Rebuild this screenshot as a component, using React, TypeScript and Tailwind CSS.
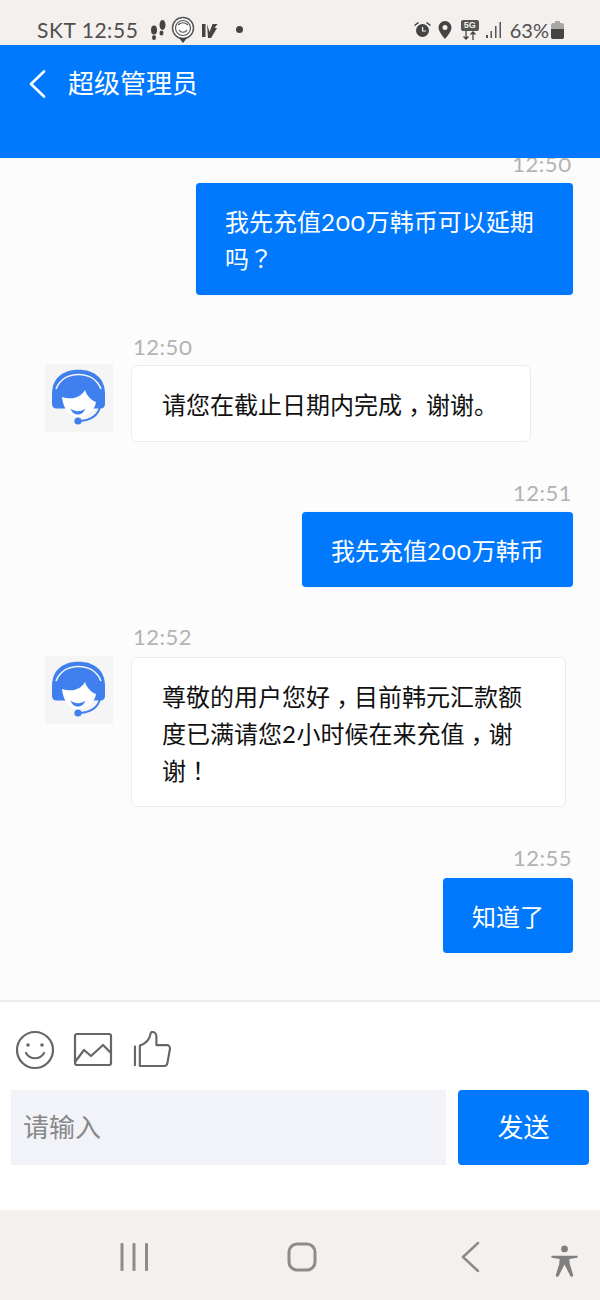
import React from "react";

const CJK = '"Noto Sans CJK SC","Noto Sans",sans-serif';
const LATIN = '"Lato",sans-serif';

function Num({ v }: { v: string }) {
  return (
    <span className="leading-[0] tracking-[0.5px]" style={{ fontFamily: LATIN }}>
      {v.split("").map((c, i) =>
        c === "0" ? (
          <span key={i} className="oldstyle-nums text-[1.12em] leading-[0]" style={{ fontFamily: '"Open Sans",sans-serif' }}>0</span>
        ) : (
          <span key={i}>{c}</span>
        )
      )}
    </span>
  );
}

function P({ c, down }: { c: string; down?: boolean }) {
  return (
    <span className={`inline-block leading-[0] ${down ? "translate-y-[7px]" : ""}`} style={{ fontFamily: '"Noto Sans CJK TC",sans-serif' }}>
      {c}
    </span>
  );
}

function Avatar() {
  return (
    <div className="w-[68px] h-[68px] bg-[#f5f5f5] shrink-0">
      <svg width="68" height="68" viewBox="0 0 68 68">
        <path d="M7 30C7 14 18 5.700 33.500 5.700S60 14 60 30v10c0 3-2 4.500-4.500 4.500H11.500C9 44.500 7 43 7 40Z" fill="#3f80ee" />
        <path d="M11 25C15 15 24 10.500 33.500 10.500S52 15 56 25" fill="none" stroke="#f5f5f5" strokeWidth="1.600" />
        <path d="M17 33C24 35 34 36 40 26c2 6 6 10 11 12-1 8-8.500 15-17.500 15C24 53 18 44 17 33Z" fill="#fff" />
        <path d="M25.500 44.500c5 3.500 10 3.500 15 0-2 4.500-4.500 6-7.500 6s-6-1.500-7.500-6Z" fill="#3f80ee" />
        <path d="M55 43c-2 8-8 13-20 14" fill="none" stroke="#3f80ee" strokeWidth="2" />
        <circle cx="33" cy="57" r="3.600" fill="#3f80ee" />
      </svg>
    </div>
  );
}

function Time({ t, right }: { t: string; right?: boolean }) {
  return (
    <div className={`h-[26px] text-[22px] leading-[22px] text-[#b3b3b3] ${right ? "text-right pr-[28px]" : "pl-[133px]"}`}>
      <Num v={t} />
    </div>
  );
}

function Out({ w, children }: { w: string; children: React.ReactNode }) {
  return (
    <div className="flex justify-end pr-[27px]">
      <div className={`${w} bg-[#0079fe] text-white rounded-[4px] text-[24px] leading-[37px] pl-[29px] pt-[19px] pb-[19px] whitespace-nowrap shadow-[0_0_1px_#9cc9fb]`}>
        {children}
      </div>
    </div>
  );
}

function In({ w, children }: { w: string; children: React.ReactNode }) {
  return (
    <div className="flex items-start pl-[45px]">
      <Avatar />
      <div className={`${w} mt-[1px] ml-[18px] bg-white border border-[#ececec] rounded-[6px] text-[24px] leading-[37px] text-[#111] pl-[30px] pt-[19px] whitespace-nowrap`}>
        {children}
      </div>
    </div>
  );
}

export default function App() {
  return (
    <div className="w-[600px] h-[1300px] flex flex-col overflow-hidden bg-white" style={{ fontFamily: CJK }}>
      <div className="h-[45px] bg-[#f3f0ee] flex items-center justify-between pl-[37px] pr-[36px] pt-[14px] text-[#4f4f4f] shrink-0">
        <div className="flex items-center">
          <span className="text-[21px] leading-none tracking-[0.55px]" style={{ fontFamily: LATIN }}>SKT 12:55</span>
          <svg className="ml-[10px]" width="20" height="22" viewBox="0 0 20 22" fill="#444">
            <ellipse cx="6" cy="11" rx="3" ry="4.500" /><ellipse cx="6" cy="18.500" rx="2" ry="2.500" />
            <ellipse cx="14.500" cy="6" rx="3" ry="5" /><ellipse cx="13.500" cy="14" rx="2" ry="2.500" />
          </svg>
          <svg className="ml-[3px]" width="24" height="28" viewBox="0 0 24 28">
            <circle cx="12" cy="12" r="10.500" fill="#fff" stroke="#555" strokeWidth="1.500" />
            <circle cx="12" cy="12" r="7.500" fill="none" stroke="#555" strokeWidth="1.200" />
            <path d="M8 14c2 3 6 3 8 0M7 9c3-3 7-3 10 0" fill="none" stroke="#555" strokeWidth="1.200" />
            <path d="M8 22h8l-4 5Z" fill="#444" />
          </svg>
          <svg className="ml-[6px]" width="18" height="18" viewBox="0 0 18 18" fill="#444">
            <path d="M1 3h3.500v13H1ZM6 3l2.500 8 3-8h5l-3 4h2.500l-6 10h-3Z" />
          </svg>
          <span className="ml-[17px] w-[7px] h-[7px] rounded-full bg-[#444]" />
        </div>
        <div className="flex items-center">
          <svg width="17" height="17" viewBox="0 0 17 17" fill="#444">
            <circle cx="8.500" cy="9.500" r="6.500" /><path d="M0 4l4-3 1 1-4 3ZM17 4l-4-3-1 1 4 3Z" /><path d="M8 6h1.200v3.500H12v1H8Z" fill="#f3f0ee" />
          </svg>
          <svg className="ml-[7px]" width="14" height="18" viewBox="0 0 14 18">
            <path d="M7 0a6.500 6.500 0 0 1 6.500 6.500C13.500 11 7 18 7 18S.5 11 .5 6.500A6.500 6.500 0 0 1 7 0Z" fill="#444" /><circle cx="7" cy="6.500" r="2.500" fill="#f3f0ee" />
          </svg>
          <div className="ml-[9px] flex flex-col items-center w-[18px]">
            <span className="w-[18px] h-[11px] bg-[#555] rounded-[2px] text-[#f3f0ee] text-[9px] leading-[11px] font-bold text-center" style={{ fontFamily: '"Liberation Sans",sans-serif' }}>5G</span>
            <svg width="16" height="9" viewBox="0 0 16 9" fill="none" stroke="#444" strokeWidth="1.300">
              <path d="M4 0v8M1.500 5.500 4 8l2.500-2.500M11 9V1M8.500 3.500 11 1l2.500 2.500" />
            </svg>
          </div>
          <svg className="ml-[7px]" width="16" height="17" viewBox="0 0 16 17" fill="#555">
            <rect x="0" y="14" width="2" height="3" /><rect x="4.500" y="10" width="1.500" height="7" /><rect x="9" y="5" width="1.500" height="12" /><rect x="13.500" y="1" width="1.500" height="16" />
          </svg>
          <span className="ml-[8px] text-[20px] leading-none" style={{ fontFamily: LATIN }}>63%</span>
          <svg className="ml-[2px]" width="13" height="18" viewBox="0 0 13 18">
            <path d="M4 0h5v2h2a2 2 0 0 1 2 2v12a2 2 0 0 1-2 2H2a2 2 0 0 1-2-2V4a2 2 0 0 1 2-2h2Z" fill="#a9a6a4" />
            <path d="M0 8h13v8a2 2 0 0 1-2 2H2a2 2 0 0 1-2-2Z" fill="#444" />
          </svg>
        </div>
      </div>

      <div className="h-[113px] bg-[#0079fe] flex items-start pl-[29px] pt-[25px] text-white shrink-0 relative z-10">
        <svg width="17" height="28" viewBox="0 0 17 28" fill="none" stroke="#fff" strokeWidth="2.600" strokeLinecap="round" strokeLinejoin="round">
          <path d="M15 1.500 2 14l13 12.500" />
        </svg>
        <span className="ml-[22px] text-[26px] leading-[28px] mt-[-2px]">超级管理员</span>
      </div>

      <div className="h-[842px] bg-[#fcfcfc] flex flex-col shrink-0 overflow-hidden">
        <div className="mt-[-7px]"><Time t="12:50" right /></div>
        <div className="mt-[6px]"><Out w="w-[377px]">我先充值<Num v="200" />万韩币可以延期<br />吗<P c="？" /></Out></div>
        <div className="mt-[39px]"><Time t="12:50" /></div>
        <div className="mt-[4px]"><In w="w-[400px] h-[77px]">请您在截止日期内完成<P c="，" down />谢谢。</In></div>
        <div className="mt-[38px]"><Time t="12:51" right /></div>
        <div className="mt-[6px]"><Out w="w-[271px]">我先充值<Num v="200" />万韩币</Out></div>
        <div className="mt-[37px]"><Time t="12:52" /></div>
        <div className="mt-[6px]"><In w="w-[435px] h-[150px]">尊敬的用户您好<P c="，" down />目前韩元汇款额<br />度已满请您<Num v="2" />小时候在来充值<P c="，" down />谢<br />谢<P c="！" /></In></div>
        <div className="mt-[38px]"><Time t="12:55" right /></div>
        <div className="mt-[7px]"><Out w="w-[130px]">知道了</Out></div>
      </div>

      <div className="h-[210px] bg-white border-t-2 border-[#ececec] shrink-0 px-[11px]">
        <div className="flex items-center h-[88px] pl-[4px] pt-[7px]">
          <svg width="40" height="40" viewBox="0 0 40 40" fill="none" stroke="#666" strokeWidth="2.200">
            <circle cx="20" cy="20" r="18" /><path d="M11 23c4 7 14 7 18 0" strokeLinecap="round" />
            <circle cx="13" cy="15" r="1.800" fill="#666" stroke="none" /><circle cx="27" cy="15" r="1.800" fill="#666" stroke="none" />
          </svg>
          <svg className="ml-[18px]" width="40" height="36" viewBox="0 0 40 36" fill="none" stroke="#666" strokeWidth="2.200" strokeLinejoin="round">
            <rect x="2" y="2" width="36" height="31" rx="2" /><path d="M2 30 11 18l7 6 12-11 8 8" />
          </svg>
          <svg className="ml-[20px]" width="39" height="37" viewBox="0 0 40 38" fill="none" stroke="#666" strokeWidth="2.200" strokeLinejoin="round">
            <path d="M2 15v21" /><path d="M7 15v21h25c1.500 0 3-1 3.300-3L38 18c0-2-1.500-3.500-3-3.500H24V6c0-3-2-5-4-5-1 0-2 .5-2 2-1 6-5 10-11 12Z" />
          </svg>
        </div>
        <div className="flex gap-[12px]">
          <div className="w-[435px] h-[75px] bg-[#f1f3f8] flex items-center pl-[12px] text-[26px] leading-none text-[#888]"><span className="mt-[-4px]">请输入</span></div>
          <div className="w-[131px] h-[75px] bg-[#0079fe] rounded-[4px] flex items-center justify-center text-white text-[26px] leading-none"><span className="mt-[-4px]">发送</span></div>
        </div>
      </div>

      <div className="h-[90px] bg-[#f3f0ee] shrink-0 flex items-start pt-[32px]">
        <svg className="ml-[120px]" width="28" height="30" viewBox="0 0 28 30" fill="#8c8c8c">
          <rect x="0.500" y="1" width="3" height="28" rx="1" /><rect x="12.500" y="1" width="3" height="28" rx="1" /><rect x="25" y="1" width="3" height="28" rx="1" />
        </svg>
        <svg className="ml-[139px]" width="30" height="30" viewBox="0 0 30 30" fill="none" stroke="#8c8c8c" strokeWidth="3">
          <rect x="2" y="2" width="26" height="26" rx="8" />
        </svg>
        <svg className="ml-[143px] mt-[-1px]" width="20" height="32" viewBox="0 0 20 32" fill="none" stroke="#8c8c8c" strokeWidth="2.500" strokeLinecap="round" strokeLinejoin="round">
          <path d="M18 2 3 16l15 14" />
        </svg>
        <svg className="ml-[71px] mt-[3px]" width="27" height="33" viewBox="0 0 28 34" fill="#808080">
          <circle cx="14" cy="4" r="3.500" />
          <path d="M1 11c-1 0-1 2 0 2l8 1.500-.5 5L5 31c0 2 2 2.500 3 1l6-12 6 12c1 1.500 3 1 3-1l-3.500-11.500-.5-5 8-1.500c1 0 1-2 0-2Z" />
        </svg>
      </div>
    </div>
  );
}
